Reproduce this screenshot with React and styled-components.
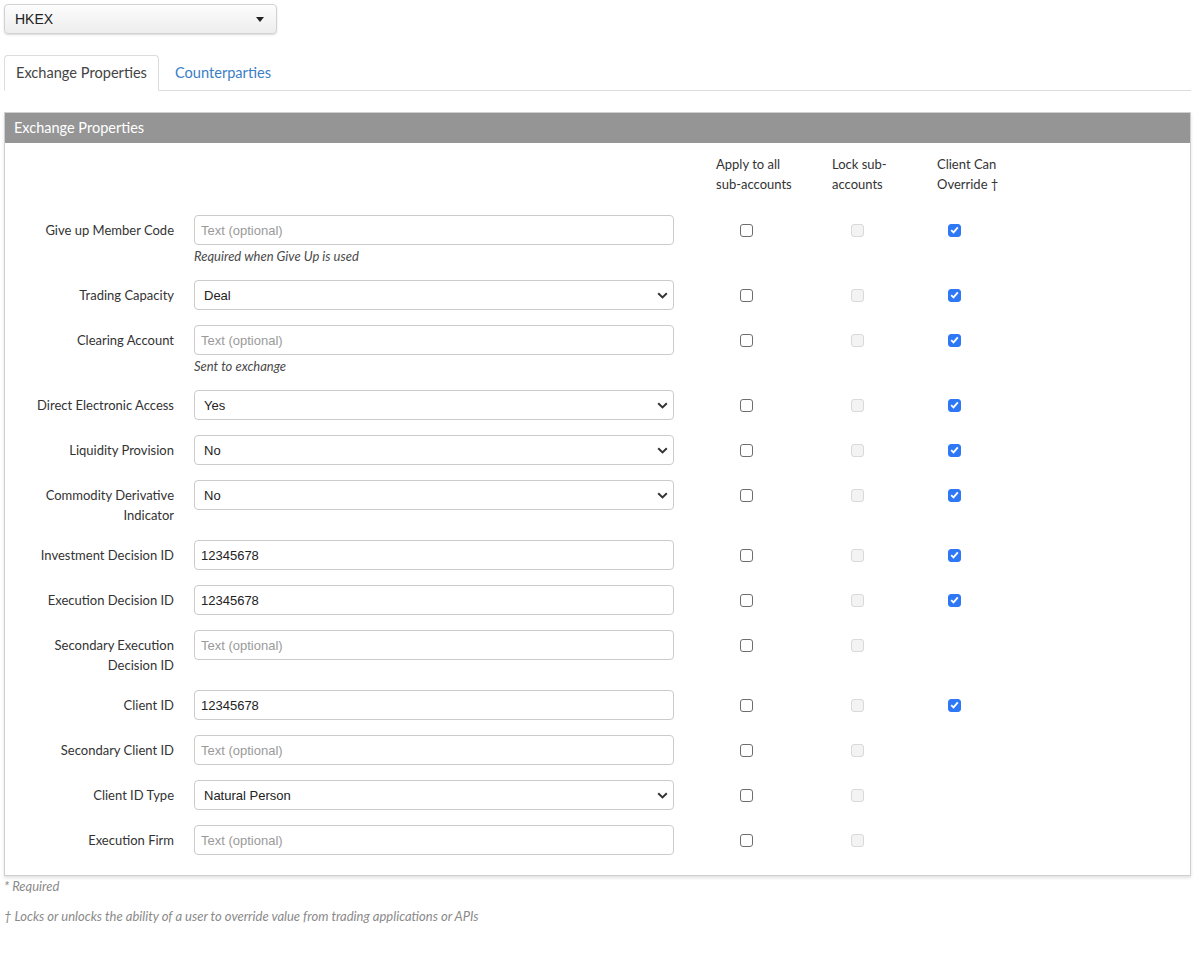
import styled, { createGlobalStyle } from "styled-components";

const GlobalStyle = createGlobalStyle`
  html, body {
    margin: 0;
    background: #fff;
  }
  body {
    padding: 4px 5px 4px 4px;
    font-family: Lato, "Open Sans", sans-serif;
    color: #333;
  }
`;

const ROWS = [
  { label: "Give up Member Code", kind: "text", help: "Required when Give Up is used", client: true },
  { label: "Trading Capacity", kind: "select", value: "Deal", client: true },
  { label: "Clearing Account", kind: "text", help: "Sent to exchange", client: true },
  { label: "Direct Electronic Access", kind: "select", value: "Yes", client: true },
  { label: "Liquidity Provision", kind: "select", value: "No", client: true },
  { label: "Commodity Derivative Indicator", kind: "select", value: "No", client: true },
  { label: "Investment Decision ID", kind: "text", value: "12345678", client: true },
  { label: "Execution Decision ID", kind: "text", value: "12345678", client: true },
  { label: "Secondary Execution Decision ID", kind: "text", client: false },
  { label: "Client ID", kind: "text", value: "12345678", client: true },
  { label: "Secondary Client ID", kind: "text", client: false },
  { label: "Client ID Type", kind: "select", value: "Natural Person", client: false },
  { label: "Execution Firm", kind: "text", client: false },
];

const ExchangeSelect = styled.button`
  display: flex;
  align-items: center;
  justify-content: space-between;
  width: 273px;
  height: 30px;
  padding: 0 10px;
  border: 1px solid #d2d2d2;
  border-radius: 4px;
  background: linear-gradient(#fdfdfd, #ededed);
  box-shadow: 0 1px 2px rgba(0, 0, 0, 0.15);
  font-family: "Liberation Sans", Arial, sans-serif;
  font-size: 14px;
  color: #222;
  cursor: pointer;
`;

const Caret = styled.span`
  width: 0;
  height: 0;
  margin-right: 2px;
  border-left: 4px solid transparent;
  border-right: 4px solid transparent;
  border-top: 5px solid #222;
`;

const TabBar = styled.div`
  display: flex;
  margin-top: 21px;
  border-bottom: 1px solid #dcdcdc;
`;

const Tab = styled.div`
  padding: 0 11px;
  height: 34px;
  line-height: 34px;
  font-size: 14.6px;
  margin-bottom: ${(p) => (p.$active ? "-1px" : "0")};
  margin-right: 4px;
  border: 1px solid ${(p) => (p.$active ? "#dcdcdc" : "transparent")};
  border-bottom: ${(p) => (p.$active ? "1px solid #fff" : "none")};
  border-radius: 4px 4px 0 0;
  background: ${(p) => (p.$active ? "#fff" : "transparent")};
  color: ${(p) => (p.$active ? "#444" : "#3a7ec6")};
`;

const Panel = styled.section`
  margin-top: 21px;
  border: 1px solid #cfcfcf;
  box-shadow: 0 2px 3px rgba(0, 0, 0, 0.12);
`;

const PanelHeader = styled.header`
  height: 30px;
  line-height: 30px;
  padding: 0 9px;
  background: #959595;
  color: #fff;
  font-size: 14.5px;
`;

const PanelBody = styled.div`
  padding: 11px 0 5px;
`;

const Row = styled.div`
  display: grid;
  grid-template-columns: 189px 480px 144px 78px 116px;
  align-items: start;
  margin-bottom: ${(p) => (p.$head ? "21px" : "15px")};
`;

const Label = styled.label`
  padding: 5px 20px 0 30px;
  font-size: 13px;
  line-height: 20px;
  text-align: right;
  color: #333;
`;

const ColHead = styled.div`
  grid-column: ${(p) => p.$col};
  padding-left: ${(p) => p.$indent}px;
  font-size: 13px;
  line-height: 20px;
  color: #333;
`;

const Field = styled.div`
  display: flex;
  flex-direction: column;
`;

const Input = styled.input`
  box-sizing: border-box;
  width: 100%;
  height: 30px;
  padding: 0 6px;
  border: 1px solid #cbcbcb;
  border-radius: 4px;
  font-family: "Liberation Sans", Arial, sans-serif;
  font-size: 13px;
  color: #222;
  outline: none;

  &::placeholder {
    color: #9a9a9a;
  }
`;

const Select = styled.select`
  box-sizing: border-box;
  width: 100%;
  height: 30px;
  padding: 0 6px 0 9px;
  appearance: none;
  border: 1px solid #cbcbcb;
  border-radius: 4px;
  background: #fff
    url("data:image/svg+xml;utf8,<svg xmlns='http://www.w3.org/2000/svg' width='11' height='7' viewBox='0 0 11 7'><path d='M1.2 1.2 5.5 5.4 9.8 1.2' fill='none' stroke='%23333' stroke-width='2'/></svg>")
    no-repeat right 5px center;
  font-family: "Liberation Sans", Arial, sans-serif;
  font-size: 13px;
  color: #222;
  outline: none;
`;

const Help = styled.div`
  margin-top: 2px;
  font-size: 13px;
  line-height: 18px;
  font-style: italic;
  color: #4a4a4a;
`;

const CheckCell = styled.div`
  display: flex;
  align-items: center;
  justify-content: center;
  height: 30px;
`;

const Box = styled.span`
  box-sizing: border-box;
  display: flex;
  align-items: center;
  justify-content: center;
  width: 13px;
  height: 13px;
  border-radius: 3px;
  border: 1px solid
    ${(p) => (p.$state === "on" ? "#2f78f5" : p.$state === "off" ? "#6e6e6e" : "#d9d9d9")};
  background: ${(p) => (p.$state === "on" ? "#2f78f5" : p.$state === "off" ? "#fff" : "#f3f3f3")};
`;

const Footnote = styled.p`
  margin: ${(p) => (p.$first ? "1px" : "12px")} 0 0;
  font-size: 13px;
  line-height: 18px;
  font-style: italic;
  color: #8a8a8a;
`;

const Check = ({ state }) => (
  <CheckCell>
    <Box $state={state}>
      {state === "on" && (
        <svg width="9" height="8" viewBox="0 0 9 8">
          <path d="M1.2 4.2 3.5 6.4 7.8 1.3" fill="none" stroke="#fff" strokeWidth="1.8" />
        </svg>
      )}
    </Box>
  </CheckCell>
);

const FormRow = ({ row }) => (
  <Row>
    <Label>{row.label}</Label>
    <Field>
      {row.kind === "select" ? (
        <Select defaultValue={row.value}>
          <option>{row.value}</option>
        </Select>
      ) : (
        <Input placeholder="Text (optional)" defaultValue={row.value || ""} />
      )}
      {row.help && <Help>{row.help}</Help>}
    </Field>
    <Check state="off" />
    <Check state="disabled" />
    {row.client ? <Check state="on" /> : <div />}
  </Row>
);

export default function App() {
  return (
    <>
      <GlobalStyle />
      <ExchangeSelect>
        HKEX
        <Caret />
      </ExchangeSelect>
      <TabBar>
        <Tab $active>Exchange Properties</Tab>
        <Tab>Counterparties</Tab>
      </TabBar>
      <Panel>
        <PanelHeader>Exchange Properties</PanelHeader>
        <PanelBody>
          <Row $head>
            <ColHead $col={3} $indent={42}>
              Apply to all
              <br />
              sub-accounts
            </ColHead>
            <ColHead $col={4} $indent={14}>
              Lock sub-
              <br />
              accounts
            </ColHead>
            <ColHead $col={5} $indent={41}>
              Client Can
              <br />
              Override †
            </ColHead>
          </Row>
          {ROWS.map((row) => (
            <FormRow key={row.label} row={row} />
          ))}
        </PanelBody>
      </Panel>
      <Footnote $first>* Required</Footnote>
      <Footnote>† Locks or unlocks the ability of a user to override value from trading applications or APIs</Footnote>
    </>
  );
}
